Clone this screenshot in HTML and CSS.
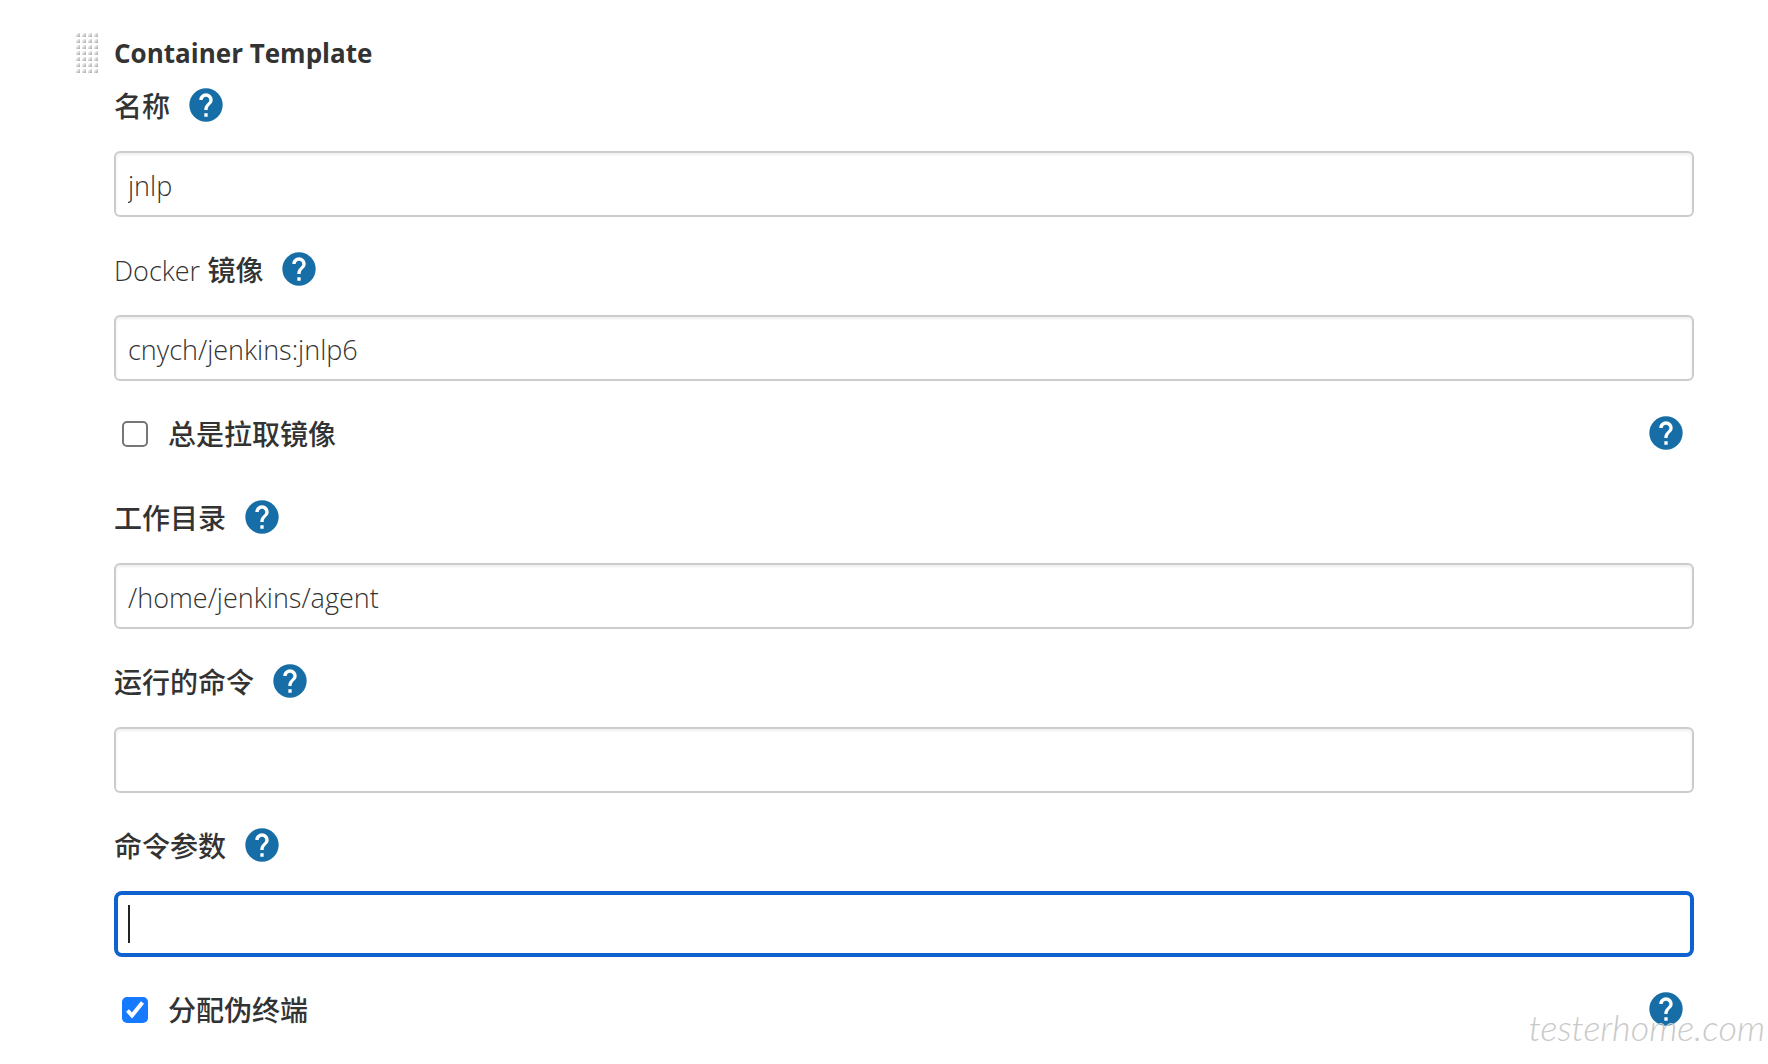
FILE: index.html
```html
<!DOCTYPE html>
<html lang="zh-CN">
<head>
<meta charset="utf-8">
<title>Container Template</title>
<meta name="viewport" content="width=device-width, initial-scale=1">
<link rel="stylesheet" href="styles.css">
</head>
<body>
<svg class="sprite" aria-hidden="true">
  <symbol id="help" viewBox="0 0 24 24">
    <circle cx="12" cy="12" r="10" fill="#176ea6"/>
    <path fill="#fff" d="M13 19h-2v-2h2v2zm2.070-7.750-.9.920C13.450 12.900 13 13.500 13 15h-2v-.5c0-1.100.450-2.100 1.170-2.830l1.240-1.260c.370-.360.590-.860.590-1.410 0-1.100-.9-2-2-2s-2 .9-2 2H8c0-2.210 1.790-4 4-4s4 1.790 4 4c0 .880-.360 1.680-.930 2.250z"/>
  </symbol>
</svg>
<form class="template">
  <header class="heading">
    <span class="grip"></span>
    <h1 class="title">Container Template</h1>
  </header>
  <div class="field">
    <div class="caption">
      <label for="name">名称</label>
      <button type="button" class="help" aria-label="帮助"><svg><use href="#help"/></svg></button>
    </div>
    <input class="box" id="name" type="text" value="jnlp">
  </div>
  <div class="field">
    <div class="caption">
      <label for="image"><span class="latin">Docker</span> 镜像</label>
      <button type="button" class="help" aria-label="帮助"><svg><use href="#help"/></svg></button>
    </div>
    <input class="box" id="image" type="text" value="cnych/jenkins:jnlp6">
  </div>
  <div class="option">
    <input class="tick" id="pull" type="checkbox">
    <label for="pull">总是拉取镜像</label>
    <button type="button" class="help" aria-label="帮助"><svg><use href="#help"/></svg></button>
  </div>
  <div class="field">
    <div class="caption">
      <label for="dir">工作目录</label>
      <button type="button" class="help" aria-label="帮助"><svg><use href="#help"/></svg></button>
    </div>
    <input class="box" id="dir" type="text" value="/home/jenkins/agent">
  </div>
  <div class="field">
    <div class="caption">
      <label for="command">运行的命令</label>
      <button type="button" class="help" aria-label="帮助"><svg><use href="#help"/></svg></button>
    </div>
    <input class="box" id="command" type="text">
  </div>
  <div class="field">
    <div class="caption">
      <label for="args">命令参数</label>
      <button type="button" class="help" aria-label="帮助"><svg><use href="#help"/></svg></button>
    </div>
    <input class="box box-active" id="args" type="text">
  </div>
  <div class="option">
    <input class="tick" id="tty" type="checkbox" checked>
    <label for="tty">分配伪终端</label>
    <button type="button" class="help" aria-label="帮助"><svg><use href="#help"/></svg></button>
  </div>
  <span class="watermark">testerhome.com</span>
</form>
</body>
</html>
```
FILE: styles.css
```css
* { box-sizing: border-box; }

body {
  margin: 0;
  background: #fff;
  color: #333;
  font-family: "Open Sans", "Noto Sans CJK SC", sans-serif;
  font-size: 28px;
  line-height: 40px;
}

.sprite { display: none; }

.template {
  position: relative;
  padding: 31px 74px 35px 76px;
}

.heading {
  display: flex;
  gap: 16px;
  height: 54px;
}

/* Drag handle: a 6px grid of shaded dots */
.grip {
  width: 22px;
  height: 42px;
  background:
    linear-gradient(90deg, transparent 4px, #fff 4px) 0 0 / 6px 6px,
    linear-gradient(#fff 2px, transparent 2px) 0 0 / 6px 6px,
    linear-gradient(135deg, #fff 25%, #a0a0a0 85%) 0 0 / 6px 6px;
}

.title {
  margin: 2px 0 0;
  font-size: 26px;
  font-weight: 700;
  line-height: 40px;
}

.field, .option { margin-left: 38px; }

.field { margin-bottom: 32px; }

.caption {
  display: flex;
  align-items: center;
  gap: 16px;
  margin-bottom: 26px;
}

label {
  padding-top: 2px;
  line-height: 38px;
  font-weight: 500;
}

.latin {
  font-size: 27px;
  font-weight: 350;
  line-height: 1;
}

.help {
  width: 40px;
  height: 40px;
  padding: 0;
  border: 0;
  background: none;
}

.help svg {
  display: block;
  width: 40px;
  height: 40px;
}

.box {
  display: block;
  width: 100%;
  height: 66px;
  padding: 2px 12px 0;
  border: 2px solid #ccc;
  border-radius: 6px;
  outline: 0;
  background: #fff;
  box-shadow: inset 0 2px 3px #0001;
  color: #333;
  font: 350 27px "Open Sans", "Noto Sans CJK SC", sans-serif;
}

/* The field being edited, with its insertion bar */
.box-active {
  border: 4px solid #0f62ce;
  border-radius: 8px;
  background: linear-gradient(#222, #222) 10px center / 2px 38px no-repeat;
  box-shadow: none;
}

.option {
  display: flex;
  align-items: center;
  margin-bottom: 44px;
  padding: 0 8px;
}

.option:last-of-type { margin-bottom: 0; }

.option .help { margin-left: auto; }

.tick {
  appearance: none;
  width: 26px;
  height: 26px;
  margin: 2px 20px 0 0;
  border: 2px solid #767676;
  border-radius: 5px;
}

.tick:checked {
  border: 0;
  background: #157aff url("data:image/svg+xml,%3Csvg xmlns='http://www.w3.org/2000/svg' viewBox='0 0 26 26'%3E%3Cpath d='M5.500 13.500l4.500 5L20.500 5.500' fill='none' stroke='white' stroke-width='4'/%3E%3C/svg%3E") center / 26px 26px;
}

.watermark {
  position: absolute;
  right: 3px;
  bottom: 17px;
  color: #c9c9c9;
  font: italic 300 36px/40px Lato, sans-serif;
  pointer-events: none;
}
```
